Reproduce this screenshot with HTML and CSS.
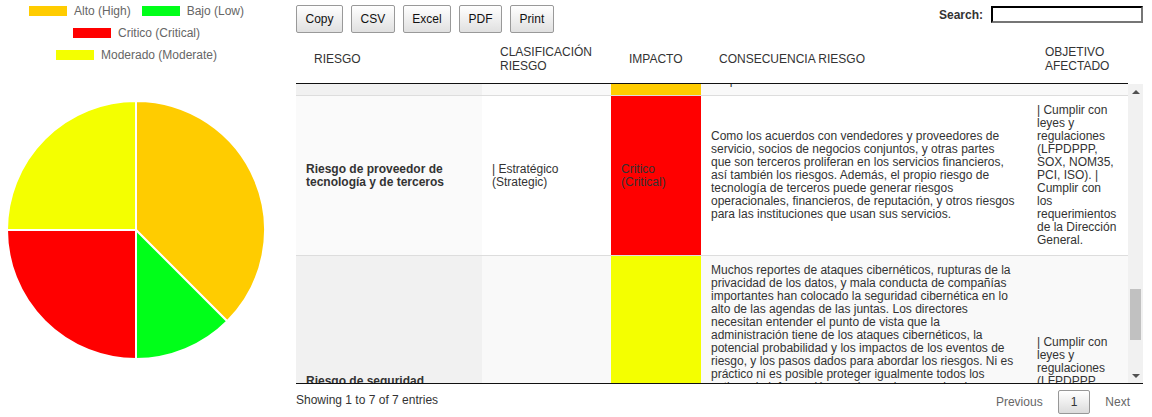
FILE: index.html
```html
<!DOCTYPE html>
<html lang="es">
<head>
<meta charset="utf-8">
<title>Matriz de riesgos</title>
<link rel="stylesheet" href="styles.css">
</head>
<body>
<div class="page">
  <aside class="chart">
    <ul class="legend">
      <li><span class="swatch alto"></span>Alto (High)</li>
      <li><span class="swatch bajo"></span>Bajo (Low)</li>
      <li><span class="swatch critico"></span>Critico (Critical)</li>
      <li><span class="swatch moderado"></span>Moderado (Moderate)</li>
    </ul>
    <svg class="pie" width="272" height="272" viewBox="0 0 272 272">
      <path class="slice-alto" d="M136 136 L136 7 A129 129 0 0 1 227.22 227.22 Z"/>
      <path class="slice-bajo" d="M136 136 L227.22 227.22 A129 129 0 0 1 136 265 Z"/>
      <path class="slice-critico" d="M136 136 L136 265 A129 129 0 0 1 7 136 Z"/>
      <path class="slice-moderado" d="M136 136 L7 136 A129 129 0 0 1 136 7 Z"/>
    </svg>
  </aside>

  <section class="panel">
    <div class="toolbar">
      <div class="buttons">
        <button class="btn" type="button">Copy</button>
        <button class="btn" type="button">CSV</button>
        <button class="btn" type="button">Excel</button>
        <button class="btn" type="button">PDF</button>
        <button class="btn" type="button">Print</button>
      </div>
      <label class="search">Search:<input type="search"></label>
    </div>

    <table class="grid grid-head">
      <colgroup>
        <col class="c1"><col class="c2"><col class="c3"><col class="c4"><col class="c5">
      </colgroup>
      <thead>
        <tr>
          <th>RIESGO</th>
          <th>CLASIFICACIÓN RIESGO</th>
          <th>IMPACTO</th>
          <th>CONSECUENCIA RIESGO</th>
          <th>OBJETIVO AFECTADO</th>
        </tr>
      </thead>
    </table>

    <div class="scroll-wrap">
      <div class="scroll-body">
        <table class="grid grid-body">
          <colgroup>
            <col class="c1"><col class="c2"><col class="c3"><col class="c4"><col class="c5">
          </colgroup>
          <tbody>
            <tr class="odd">
              <td class="sort-col risk-name">Riesgo de continuidad del negocio</td>
              <td>| Operativo (Operational)</td>
              <td class="impact alto">Alto (High)</td>
              <td>La interrupción de los sistemas, de las instalaciones o del personal clave puede impedir que la institución preste sus servicios a los clientes, ocasionando pérdidas económicas, sanciones y daños a su reputación.</td>
              <td>| Cumplir con leyes y regulaciones (LFPDPPP, SOX, NOM35, PCI, ISO). | Cumplir con los requerimientos de la Dirección General. | Asegurar la continuidad operativa. | Proteger la reputación. | Mantener la confianza de los clientes.</td>
            </tr>
            <tr class="even">
              <td class="sort-col risk-name">Riesgo de crédito</td>
              <td>| Financiero (Financial)</td>
              <td class="impact critico">Critico (Critical)</td>
              <td>El incumplimiento de las obligaciones de pago de los clientes y de las contrapartes puede afectar la liquidez, la rentabilidad y la solvencia de la institución.</td>
              <td>| Cumplir con leyes y regulaciones (LFPDPPP, SOX, NOM35, PCI, ISO). | Cumplir con los requerimientos de la Dirección General. | Asegurar la continuidad operativa. | Proteger la reputación.</td>
            </tr>
            <tr class="odd">
              <td class="sort-col risk-name">Riesgo de cumplimiento regulatorio</td>
              <td>| Cumplimiento (Compliance)</td>
              <td class="impact bajo">Bajo (Low)</td>
              <td>Los cambios constantes en la regulación financiera y en las leyes de protección de datos exigen que la institución adapte sus procesos para evitar multas y sanciones de las autoridades.</td>
              <td>| Cumplir con leyes y regulaciones (LFPDPPP, SOX, NOM35, PCI, ISO). | Cumplir con los requerimientos de la Dirección General. | Asegurar la continuidad operativa. | Proteger la reputación. | Mantener la confianza de los clientes.</td>
            </tr>
            <tr class="even">
              <td class="sort-col risk-name">Riesgo de liquidez</td>
              <td>| Financiero (Financial)</td>
              <td class="impact moderado">Moderado (Moderate)</td>
              <td>La falta de recursos líquidos suficientes para hacer frente a las obligaciones de corto plazo puede obligar a la institución a vender activos en condiciones desfavorables.</td>
              <td>| Cumplir con leyes y regulaciones (LFPDPPP, SOX, NOM35, PCI, ISO). | Cumplir con los requerimientos de la Dirección General. | Asegurar la continuidad operativa. | Proteger la reputación.</td>
            </tr>
            <tr class="odd">
              <td class="sort-col risk-name">Riesgo de mercado</td>
              <td>| Financiero (Financial)</td>
              <td class="impact alto">Alto (High)</td>
              <td>Las variaciones en las tasas de interés, los tipos de cambio, los precios de las acciones y de las materias primas pueden afectar de manera significativa el valor de los portafolios de inversión y los resultados financieros de la institución. Una gestión inadecuada de estas exposiciones, la falta de coberturas apropiadas o modelos de valuación deficientes pueden provocar pérdidas relevantes y afectar<br>los procesos.</td>
              <td>| Cumplir con los requerimientos de la Dirección General.</td>
            </tr>
            <tr class="even row-focus">
              <td class="sort-col risk-name">Riesgo de proveedor de tecnología y de terceros</td>
              <td>| Estratégico (Strategic)</td>
              <td class="impact critico">Critico (Critical)</td>
              <td>Como los acuerdos con vendedores y proveedores de servicio, socios de negocios conjuntos, y otras partes que son terceros proliferan en los servicios financieros, así también los riesgos. Además, el propio riesgo de tecnología de terceros puede generar riesgos operacionales, financieros, de reputación, y otros riesgos para las instituciones que usan sus servicios.</td>
              <td>| Cumplir con leyes y regulaciones (LFPDPPP, SOX, NOM35, PCI, ISO). | Cumplir con los requerimientos de la Dirección General.</td>
            </tr>
            <tr class="odd">
              <td class="sort-col risk-name">Riesgo de seguridad cibernética y de la información de clientes y proveedores</td>
              <td>| Operativo (Operational)</td>
              <td class="impact moderado">Moderado (Moderate)</td>
              <td>Muchos reportes de ataques cibernéticos, rupturas de la privacidad de los datos, y mala conducta de compañías importantes han colocado la seguridad cibernética en lo alto de las agendas de las juntas. Los directores necesitan entender el punto de vista que la administración tiene de los ataques cibernéticos, la potencial probabilidad y los impactos de los eventos de riesgo, y los pasos dados para abordar los riesgos. Ni es práctico ni es posible proteger igualmente todos los activos de información, por lo que las organizaciones deben identificar cuáles son sus activos más críticos y concentrar en ellos sus esfuerzos de protección. El consejo debe asegurarse de que la administración cuenta con un programa de ciberseguridad sólido, que incluya la evaluación periódica de amenazas y vulnerabilidades, planes de respuesta a incidentes, capacitación del personal y pruebas regulares de los controles, así como la supervisión de los terceros que tienen acceso a los sistemas y a los datos sensibles de la institución y de sus clientes.<br>Asimismo, debe revisar la eficacia de dichas medidas.</td>
              <td>| Cumplir con leyes y regulaciones (LFPDPPP, SOX, NOM35, PCI, ISO). | Proteger los activos de información sensible.</td>
            </tr>
          </tbody>
        </table>
      </div>
      <div class="scrollbar" aria-hidden="true">
        <span class="sb-btn sb-up"></span>
        <div class="sb-track"><span class="sb-thumb"></span></div>
        <span class="sb-btn sb-down"></span>
      </div>
    </div>

    <div class="footer">
      <div class="info">Showing 1 to 7 of 7 entries</div>
      <div class="pager">
        <span class="page-btn disabled">Previous</span>
        <span class="page-btn current">1</span>
        <span class="page-btn disabled">Next</span>
      </div>
    </div>
  </section>
</div>
<script src="script.js"></script>
</body>
</html>
```

FILE: styles.css
```css
* {
  box-sizing: border-box;
}

body {
  margin: 0;
  font-family: "Liberation Sans", Arial, Helvetica, sans-serif;
  font-size: 12px;
  color: #333;
  background: #fff;
}

.page {
  display: flex;
  gap: 24px;
}

/* ---------- chart ---------- */
.chart {
  width: 272px;
  flex: none;
}

.legend {
  list-style: none;
  margin: 0;
  padding: 5px 0 0;
  display: flex;
  flex-wrap: wrap;
  justify-content: center;
  column-gap: 10px;
  row-gap: 10px;
  color: #666;
  font-size: 12px;
  line-height: 12px;
}

.legend li {
  display: flex;
  align-items: center;
  white-space: nowrap;
}

.swatch {
  width: 40px;
  height: 12px;
  border: 1px solid #fff;
  margin-right: 6px;
}

.swatch.alto { background: #ffcc00; }
.swatch.bajo { background: #00ff19; }
.swatch.critico { background: #ff0000; }
.swatch.moderado { background: #f4ff00; }

.pie {
  display: block;
  margin-top: 33px;
}

.pie path {
  stroke: #fff;
  stroke-width: 2;
  stroke-linejoin: round;
}

.slice-alto { fill: #ffcc00; }
.slice-bajo { fill: #00ff19; }
.slice-critico { fill: #ff0000; }
.slice-moderado { fill: #f4ff00; }

/* ---------- table panel ---------- */
.panel {
  width: 847px;
  flex: none;
  padding-top: 5px;
}

.toolbar {
  display: flex;
  justify-content: space-between;
  align-items: flex-start;
  height: 30px;
}

.buttons {
  display: flex;
  gap: 8px;
}

.btn {
  height: 28px;
  padding: 0 8.5px;
  border: 1px solid #999;
  border-radius: 2px;
  background: linear-gradient(to bottom, #fff 0%, #e0e0e0 100%);
  font-family: "Liberation Sans", Arial, sans-serif;
  font-size: 12px;
  color: #111;
}

.search {
  display: flex;
  align-items: center;
  margin-top: 1px;
  font-weight: bold;
  font-size: 12px;
  color: #333;
}

.search input {
  margin-left: 8px;
  width: 152px;
  height: 17px;
  padding: 0 2px;
  border-width: 2px;
  border-style: inset;
  border-color: #333 #767676 #767676 #333;
  background: #fff;
  font: 12px "Liberation Sans", Arial, sans-serif;
}

.grid {
  width: 832px;
  table-layout: fixed;
  border-collapse: separate;
  border-spacing: 0;
}

.c1 { width: 186px; }
.c2 { width: 129px; }
.c3 { width: 90px; }
.c4 { width: 326px; }
.c5 { width: 101px; }

.grid-head th {
  padding: 10px 18px;
  text-align: left;
  vertical-align: middle;
  font-weight: normal;
  line-height: 14px;
  color: #333;
  border-bottom: 1px solid #111;
}

.scroll-wrap {
  display: flex;
  border-bottom: 1px solid #111;
}

.scroll-body {
  width: 832px;
  height: 299px;
  overflow: hidden;
  flex: none;
}

.scrollbar {
  width: 15px;
  height: 299px;
  flex: none;
  display: flex;
  flex-direction: column;
  background: #f1f1f1;
}

.sb-btn {
  height: 15px;
  flex: none;
  display: flex;
  align-items: center;
  justify-content: center;
}

.sb-btn::before {
  content: "";
  width: 0;
  height: 0;
  border-left: 4px solid transparent;
  border-right: 4px solid transparent;
}

.sb-up::before {
  border-bottom: 4px solid #505050;
}

.sb-down::before {
  border-top: 4px solid #505050;
}

.sb-track {
  flex: 1;
  display: flex;
  flex-direction: column;
}

.sb-thumb {
  display: block;
  margin: 0 2px;
  height: 50px;
  background: #c1c1c1;
}

.grid-body td {
  padding: 8px 10px;
  line-height: 13px;
  vertical-align: middle;
  border-top: 1px solid #ddd;
  background: #fff;
}

.grid-body tr.odd td { background: #f9f9f9; }
.grid-body tr.odd td.sort-col { background: #f1f1f1; }
.grid-body tr.even td.sort-col { background: #fafafa; }

.risk-name {
  font-weight: bold;
}

.grid-body tr td.impact.alto { background: #ffcc00; }
.grid-body tr td.impact.bajo { background: #00ff19; }
.grid-body tr td.impact.critico { background: #ff0000; }
.grid-body tr td.impact.moderado { background: #f4ff00; }

/* ---------- footer ---------- */
.footer {
  display: flex;
  justify-content: space-between;
  align-items: flex-start;
}

.info {
  padding-top: 9px;
  line-height: 14px;
  color: #333;
}

.pager {
  display: flex;
  gap: 2px;
  padding-top: 6px;
}

.page-btn {
  padding: 4px 12px;
  line-height: 14px;
  border: 1px solid transparent;
  border-radius: 2px;
  color: #666;
}

.page-btn.current {
  color: #333;
  border-color: #979797;
  background: linear-gradient(to bottom, #fff 0%, #dcdcdc 100%);
}
```

FILE: script.js
```js
(function () {
  var body = document.querySelector('.scroll-body');
  var row = document.querySelector('.row-focus');
  var track = document.querySelector('.sb-track');
  var thumb = document.querySelector('.sb-thumb');
  if (!body || !row) return;

  var offset = row.getBoundingClientRect().top - body.getBoundingClientRect().top;
  body.scrollTop = offset - 11;

  if (track && thumb) {
    var trackHeight = track.clientHeight;
    var total = body.scrollHeight;
    var size = Math.max(20, Math.round(trackHeight * body.clientHeight / total));
    var top = Math.round(trackHeight * body.scrollTop / total);
    thumb.style.height = size + 'px';
    thumb.style.marginTop = top + 'px';
  }
})();
```
